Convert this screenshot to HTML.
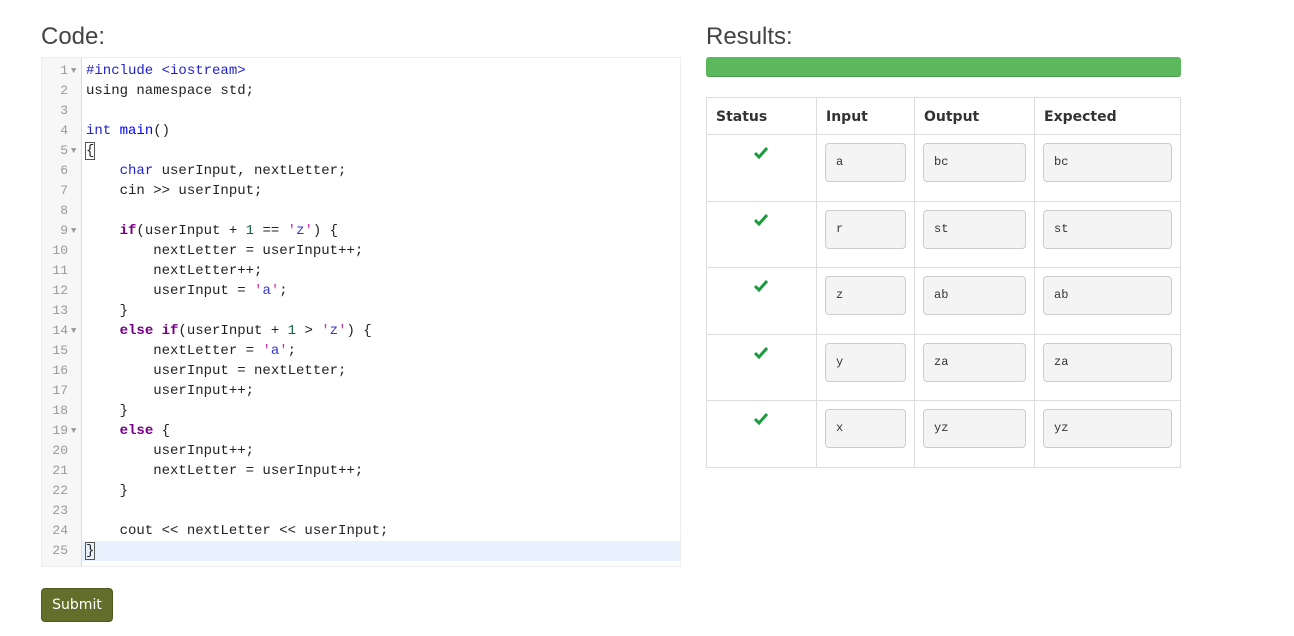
<!DOCTYPE html>
<html><head><meta charset="utf-8"><style>
body{margin:0;width:1294px;height:636px;background:#fff;font-family:"DejaVu Sans","Liberation Sans",sans-serif;color:#333;position:relative;overflow:hidden}
h2{position:absolute;margin:0;font-family:"Liberation Sans",sans-serif;font-weight:normal;font-size:24px;color:#444;top:23px}
.ed{position:absolute;left:41px;top:57px;width:638px;height:508px;border:1px solid #eee;background:#fff}
.gut{position:absolute;left:0;top:0;width:39px;height:100%;background:#f7f7f7;border-right:1px solid #ddd}
.ln{position:absolute;left:0;width:640px;height:20px;font:14px/20px "Liberation Mono",monospace;white-space:pre;color:#222}
.ln .n{position:absolute;left:0;width:26px;text-align:right;color:#999;font-size:13px}
.ln .f{position:absolute;left:29px;top:0;color:#999;font-size:9px}
.ln .c{position:absolute;left:44px}
.k{color:#708;font-weight:bold}.t{color:#22c}.d{color:#00f}.m{color:#22c}.num{color:#164}.s{color:#33c}.q{color:#c3a}
.act{background:#e8f2ff}
.bar{position:absolute;left:706px;top:57px;width:475px;height:20px;background:#5cb85c;border-radius:3px;box-shadow:inset 0 -1px 0 rgba(0,0,0,.15)}
table{position:absolute;left:706px;top:97px;border-collapse:collapse;width:475px}
td,th{border:1px solid #ddd;padding:0;vertical-align:top;text-align:left}
th{height:34px;font-size:14px;font-weight:bold;padding:2px 0 0 9px;vertical-align:middle;color:#333}
td{height:65.6px}
.box{margin:8px 8px 0 8px;height:37px;border:1px solid #ccc;border-radius:4px;background:#f4f4f4;font:12px/37px "Liberation Mono",monospace;padding-left:10px;color:#333}
.chk{display:block;margin:11px 0 0 47px}
.btn{position:absolute;left:41px;top:588px;width:70px;height:32px;background:#636e2b;border:1px solid #4f5a20;border-radius:4px;color:#fff;font-size:14px;line-height:32px;text-align:center}
</style></head><body>
<h2 style="left:41px">Code:</h2>
<h2 style="left:706px">Results:</h2>
<div class="ed"><div class="gut"></div>
<div class="ln" style="top:3px"><span class="n">1</span><span class="f">▼</span><span class="c"><span class="m">#include &lt;iostream&gt;</span></span></div>
<div class="ln" style="top:23px"><span class="n">2</span><span class="c">using namespace std;</span></div>
<div class="ln" style="top:43px"><span class="n">3</span></div>
<div class="ln" style="top:63px"><span class="n">4</span><span class="c"><span class="t">int</span> <span class="d">main</span>()</span></div>
<div class="ln" style="top:83px"><span class="n">5</span><span class="f">▼</span><span class="c"><span style="outline:1px solid #555">{</span></span></div>
<div class="ln" style="top:103px"><span class="n">6</span><span class="c">    <span class="t">char</span> userInput, nextLetter;</span></div>
<div class="ln" style="top:123px"><span class="n">7</span><span class="c">    cin &gt;&gt; userInput;</span></div>
<div class="ln" style="top:143px"><span class="n">8</span></div>
<div class="ln" style="top:163px"><span class="n">9</span><span class="f">▼</span><span class="c">    <span class="k">if</span>(userInput + <span class="num">1</span> == <span class="q">'</span><span class="s">z</span><span class="q">'</span>) {</span></div>
<div class="ln" style="top:183px"><span class="n">10</span><span class="c">        nextLetter = userInput++;</span></div>
<div class="ln" style="top:203px"><span class="n">11</span><span class="c">        nextLetter++;</span></div>
<div class="ln" style="top:223px"><span class="n">12</span><span class="c">        userInput = <span class="q">'</span><span class="s">a</span><span class="q">'</span>;</span></div>
<div class="ln" style="top:243px"><span class="n">13</span><span class="c">    }</span></div>
<div class="ln" style="top:263px"><span class="n">14</span><span class="f">▼</span><span class="c">    <span class="k">else if</span>(userInput + <span class="num">1</span> &gt; <span class="q">'</span><span class="s">z</span><span class="q">'</span>) {</span></div>
<div class="ln" style="top:283px"><span class="n">15</span><span class="c">        nextLetter = <span class="q">'</span><span class="s">a</span><span class="q">'</span>;</span></div>
<div class="ln" style="top:303px"><span class="n">16</span><span class="c">        userInput = nextLetter;</span></div>
<div class="ln" style="top:323px"><span class="n">17</span><span class="c">        userInput++;</span></div>
<div class="ln" style="top:343px"><span class="n">18</span><span class="c">    }</span></div>
<div class="ln" style="top:363px"><span class="n">19</span><span class="f">▼</span><span class="c">    <span class="k">else</span> {</span></div>
<div class="ln" style="top:383px"><span class="n">20</span><span class="c">        userInput++;</span></div>
<div class="ln" style="top:403px"><span class="n">21</span><span class="c">        nextLetter = userInput++;</span></div>
<div class="ln" style="top:423px"><span class="n">22</span><span class="c">    }</span></div>
<div class="ln" style="top:443px"><span class="n">23</span></div>
<div class="ln" style="top:463px"><span class="n">24</span><span class="c">    cout &lt;&lt; nextLetter &lt;&lt; userInput;</span></div>
<div class="ln" style="top:483px;left:40px;width:598px" ><div class="act" style="position:absolute;left:0;top:0;width:598px;height:20px"></div><span class="c" style="left:4px"><span style="outline:1px solid #555">}</span></span></div>
<div class="ln" style="top:483px;width:39px"><span class="n">25</span></div>
</div>
<div class="bar"></div>
<table>
<tr><th style="width:100px">Status</th><th style="width:88px">Input</th><th style="width:110px">Output</th><th>Expected</th></tr>
<tr><td><svg class="chk" width="14" height="13" viewBox="0 0 14 13"><path d="M1 7l4 4 8-9" fill="none" stroke="#1a9c3e" stroke-width="3"/></svg></td><td><div class="box">a</div></td><td><div class="box">bc</div></td><td><div class="box">bc</div></td></tr>
<tr><td><svg class="chk" width="14" height="13" viewBox="0 0 14 13"><path d="M1 7l4 4 8-9" fill="none" stroke="#1a9c3e" stroke-width="3"/></svg></td><td><div class="box">r</div></td><td><div class="box">st</div></td><td><div class="box">st</div></td></tr>
<tr><td><svg class="chk" width="14" height="13" viewBox="0 0 14 13"><path d="M1 7l4 4 8-9" fill="none" stroke="#1a9c3e" stroke-width="3"/></svg></td><td><div class="box">z</div></td><td><div class="box">ab</div></td><td><div class="box">ab</div></td></tr>
<tr><td><svg class="chk" width="14" height="13" viewBox="0 0 14 13"><path d="M1 7l4 4 8-9" fill="none" stroke="#1a9c3e" stroke-width="3"/></svg></td><td><div class="box">y</div></td><td><div class="box">za</div></td><td><div class="box">za</div></td></tr>
<tr><td><svg class="chk" width="14" height="13" viewBox="0 0 14 13"><path d="M1 7l4 4 8-9" fill="none" stroke="#1a9c3e" stroke-width="3"/></svg></td><td><div class="box">x</div></td><td><div class="box">yz</div></td><td><div class="box">yz</div></td></tr>
</table>
<div class="btn">Submit</div>
</body></html>
